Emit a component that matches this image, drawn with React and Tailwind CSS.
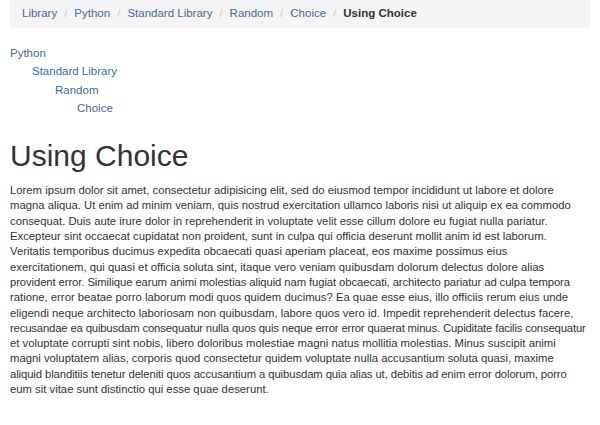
const crumbs = ["Library", "Python", "Standard Library", "Random", "Choice"];

const tree = [
  { label: "Python", indent: "pl-0" },
  { label: "Standard Library", indent: "pl-[22px]" },
  { label: "Random", indent: "pl-[45px]" },
  { label: "Choice", indent: "pl-[67px]" },
];

// lines broken where the original page wraps them
const lines = [
  "Lorem ipsum dolor sit amet, consectetur adipisicing elit, sed do eiusmod tempor incididunt ut labore et dolore",
  "magna aliqua. Ut enim ad minim veniam, quis nostrud exercitation ullamco laboris nisi ut aliquip ex ea commodo",
  "consequat. Duis aute irure dolor in reprehenderit in voluptate velit esse cillum dolore eu fugiat nulla pariatur.",
  "Excepteur sint occaecat cupidatat non proident, sunt in culpa qui officia deserunt mollit anim id est laborum.",
  "Veritatis temporibus ducimus expedita obcaecati quasi aperiam placeat, eos maxime possimus eius",
  "exercitationem, qui quasi et officia soluta sint, itaque vero veniam quibusdam dolorum delectus dolore alias",
  "provident error. Similique earum animi molestias aliquid nam fugiat obcaecati, architecto pariatur ad culpa tempora",
  "ratione, error beatae porro laborum modi quos quidem ducimus? Ea quae esse eius, illo officiis rerum eius unde",
  "eligendi neque architecto laboriosam non quibusdam, labore quos vero id. Impedit reprehenderit delectus facere,",
  "recusandae ea quibusdam consequatur nulla quos quis neque error error quaerat minus. Cupiditate facilis consequatur",
  "et voluptate corrupti sint nobis, libero doloribus molestiae magni natus mollitia molestias. Minus suscipit animi",
  "magni voluptatem alias, corporis quod consectetur quidem voluptate nulla accusantium soluta quasi, maxime",
  "aliquid blanditiis tenetur deleniti quos accusantium a quibusdam quia alias ut, debitis ad enim error dolorum, porro",
  "eum sit vitae sunt distinctio qui esse quae deserunt.",
];

export default function App() {
  return (
    <div className="w-[600px] h-[425px] bg-white px-[10px] font-['Liberation_Sans',Arial,sans-serif] text-[11.5px] leading-[17.15px] text-[#333]">
      <ol className="flex items-center h-[28px] px-[12px] bg-[#f5f5f5] rounded-b-[4px]">
        {crumbs.map((c) => (
          <li key={c} className="flex items-center">
            <a className="text-[#3b6e9f]">{c}</a>
            <span className="px-[7px] text-[#ccc]">/</span>
          </li>
        ))}
        <li className="font-bold text-[#333]">Using Choice</li>
      </ol>

      <ul className="mt-[17px] flex flex-col">
        {tree.map((t) => (
          <li key={t.label} className={`${t.indent} h-[18.3px] text-[#3b6e9f]`}>
            {t.label}
          </li>
        ))}
      </ul>

      <h1 className="mt-[21px] text-[30px] leading-[33px] text-[#333]">Using Choice</h1>
      <p className="mt-[11px] text-[11.3px] leading-[15.3px] whitespace-nowrap">
        {lines.map((l, i) => (
          <span
            key={i}
            className={i === 9 ? "tracking-[-0.16px]" : i === 6 || i === 12 ? "tracking-[-0.1px]" : ""}
          >
            {l}
            {i < lines.length - 1 && <br />}
          </span>
        ))}
      </p>
    </div>
  );
}
